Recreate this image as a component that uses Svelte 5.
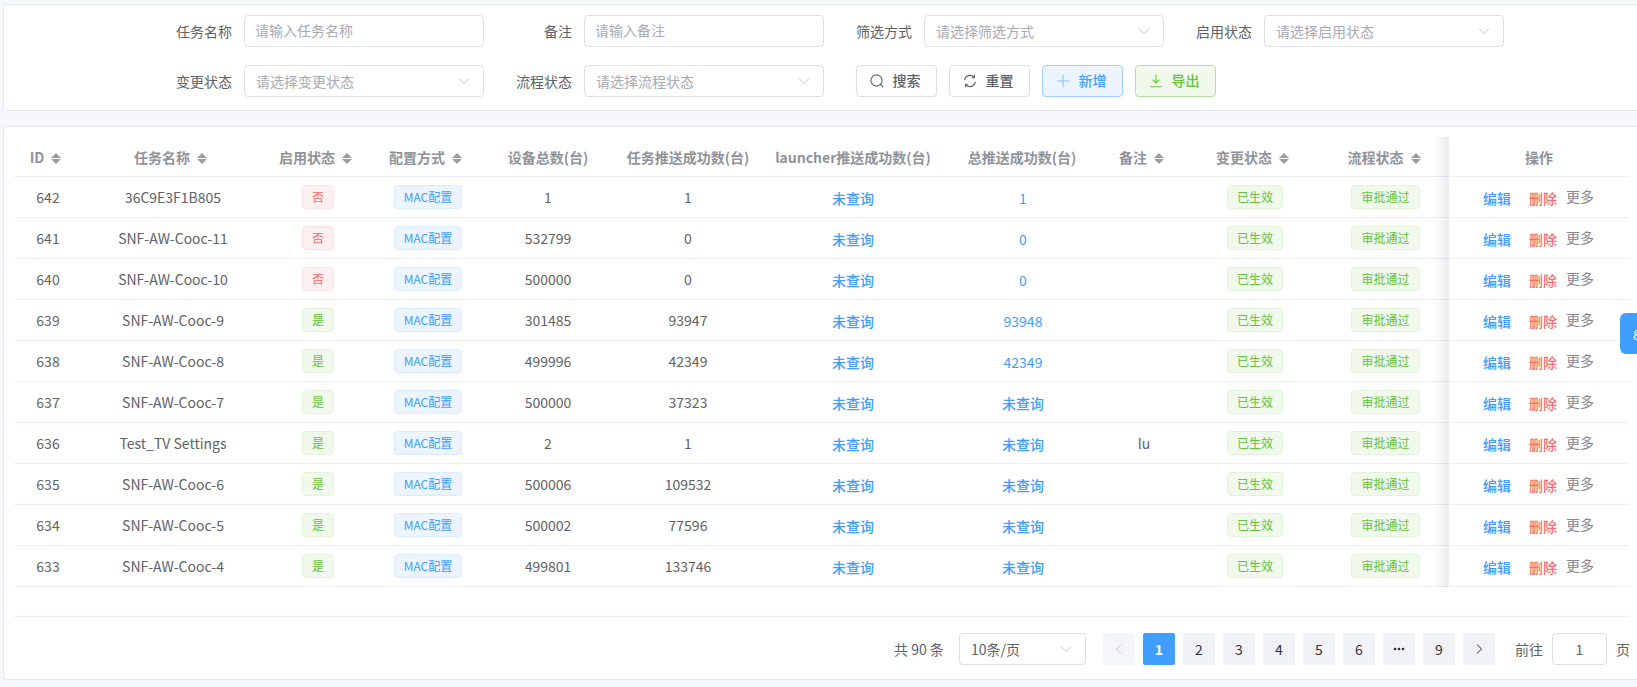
<script>
  const rows = [
    [642,'36C9E3F1B805',0,1,1,'1',''],
    [641,'SNF-AW-Cooc-11',0,532799,0,'0',''],
    [640,'SNF-AW-Cooc-10',0,500000,0,'0',''],
    [639,'SNF-AW-Cooc-9',1,301485,93947,'93948',''],
    [638,'SNF-AW-Cooc-8',1,499996,42349,'42349',''],
    [637,'SNF-AW-Cooc-7',1,500000,37323,null,''],
    [636,'Test_TV Settings',1,2,1,null,'lu'],
    [635,'SNF-AW-Cooc-6',1,500006,109532,null,''],
    [634,'SNF-AW-Cooc-5',1,500002,77596,null,''],
    [633,'SNF-AW-Cooc-4',1,499801,133746,null,''],
  ];
  const heads = [
    ['ID',true,68],['任务名称',true,182],['启用状态',true,108],['配置方式',true,112],
    ['设备总数(台)',false,128],['任务推送成功数(台)',false,152],['launcher推送成功数(台)',false,178],
    ['总推送成功数(台)',false,160],['备注',true,84],['变更状态',true,138],['流程状态',true,125],['操作',false,180],
  ];
  const pages = ['2','3','4','5','6','more','9'];
</script>

{#snippet chevron()}
  <svg class="chev" viewBox="0 0 14 14"><path d="M2 4.5 7 9.7 12 4.5" fill="none" stroke="#c0c4cc" stroke-width="1"/></svg>
{/snippet}

{#snippet field(label, placeholder, select)}
  <div class="item">
    <span class="lab">{label}</span>
    <div class="inp" class:sel={select}>
      <span class="ph">{placeholder}</span>
      {#if select}{@render chevron()}{/if}
    </div>
  </div>
{/snippet}

<div class="page">
  <section class="card filter">
    <div class="frow">
      {@render field('任务名称','请输入任务名称',false)}
      {@render field('备注','请输入备注',false)}
      {@render field('筛选方式','请选择筛选方式',true)}
      {@render field('启用状态','请选择启用状态',true)}
    </div>
    <div class="frow">
      {@render field('变更状态','请选择变更状态',true)}
      {@render field('流程状态','请选择流程状态',true)}
      <div class="btns">
        <button class="btn">
          <svg viewBox="0 0 14 14"><circle cx="6.5" cy="6.5" r="5.6" fill="none" stroke="currentColor" stroke-width="1.1"/><path d="M10.6 10.6 13 13" stroke="currentColor" stroke-width="1.1"/></svg>
          搜索
        </button>
        <button class="btn">
          <svg viewBox="0 0 14 14"><path d="M1.6 6.2A5.4 5.4 0 0 1 11 3.2M12.4 7.8A5.4 5.4 0 0 1 3 10.8" fill="none" stroke="currentColor" stroke-width="1.1"/><path d="M11.4 1v2.7H8.8M2.6 13v-2.7h2.6" fill="none" stroke="currentColor" stroke-width="1.1"/></svg>
          重置
        </button>
        <button class="btn blue">
          <svg viewBox="0 0 14 14"><path d="M7 .8v12.4M.8 7h12.4" fill="none" stroke="currentColor" stroke-width="1.2"/></svg>
          新增
        </button>
        <button class="btn green">
          <svg viewBox="0 0 14 14"><path d="M7 .8v8M3.6 5.6 7 9l3.4-3.4M1.2 12.8h11.6" fill="none" stroke="currentColor" stroke-width="1.1"/></svg>
          导出
        </button>
      </div>
    </div>
  </section>

  <section class="card main">
    <div class="tablewrap">
      <table>
        <colgroup>
          {#each heads as h}<col style:width="{h[2]}px" />{/each}
        </colgroup>
        <thead>
          <tr>
            {#each heads as h}
              <th>
                <span class="ht">{h[0]}{#if h[1]}<span class="sort"><i class="up"></i><i class="down"></i></span>{/if}</span>
              </th>
            {/each}
          </tr>
        </thead>
        <tbody>
          {#each rows as r}
            <tr>
              <td>{r[0]}</td>
              <td>{r[1]}</td>
              <td><span class="tag {r[2] ? 'g' : 'r'}">{r[2] ? '是' : '否'}</span></td>
              <td><span class="tag b">MAC配置</span></td>
              <td>{r[3]}</td>
              <td>{r[4]}</td>
              <td><span class="link strong">未查询</span></td>
              <td class="tot">
                {#if r[5] === null}<span class="link strong">未查询</span>{:else}<span class="link">{r[5]}</span>{/if}
              </td>
              <td>{r[6]}</td>
              <td><span class="tag g">已生效</span></td>
              <td class="flow"><span class="tag g">审批通过</span></td>
              <td class="ops">
                <span class="link strong">编辑</span><span class="del">删除</span><span class="more">更多</span>
              </td>
            </tr>
          {/each}
        </tbody>
      </table>
      <div class="shade"></div>
    </div>

    <footer class="pager">
      <span class="total">共 90 条</span>
      <div class="size"><span>10条/页</span>{@render chevron()}</div>
      <div class="pbtns">
        <span class="pb off"><svg viewBox="0 0 12 12"><path d="M8 1.5 3.5 6 8 10.5" fill="none" stroke="currentColor"/></svg></span>
        <span class="pb on">1</span>
        {#each pages as p}
          <span class="pb">
            {#if p === 'more'}
              <svg viewBox="0 0 12 12"><circle cx="2" cy="6" r="1.3" fill="currentColor"/><circle cx="6" cy="6" r="1.3" fill="currentColor"/><circle cx="10" cy="6" r="1.3" fill="currentColor"/></svg>
            {:else}{p}{/if}
          </span>
        {/each}
        <span class="pb"><svg viewBox="0 0 12 12"><path d="M4 1.5 8.5 6 4 10.5" fill="none" stroke="currentColor"/></svg></span>
      </div>
      <span class="goto">前往</span>
      <div class="jump">1</div>
      <span class="unit">页</span>
    </footer>
  </section>

  <div class="float"><span>8</span></div>
</div>

<style>
  :global(body) { margin: 0; background: #f5f7fa; }
  .page {
    position: relative; height: 687px; width: 1637px; overflow: hidden; box-sizing: border-box;
    padding: 4px 0 0 3px; background: #f5f7fa; color: #606266;
    font: 14px "Noto Sans CJK SC", "Noto Sans", sans-serif;
  }
  .card { background: #fff; border: 1px solid #e4e7ed; border-radius: 4px; box-sizing: border-box; width: 1640px; }
  .filter { height: 107px; padding-top: 10px; margin-bottom: 15px; }
  .frow { display: flex; height: 32px; margin-bottom: 18px; padding-left: 6px; }
  .item { display: flex; align-items: center; width: 340px; flex: none; }
  .frow > .item:first-child { margin-left: 144px; }
  .lab { width: 90px; padding-right: 12px; box-sizing: border-box; text-align: right; }
  .inp {
    display: flex; align-items: center; justify-content: space-between; height: 32px; width: 240px;
    box-sizing: border-box; border: 1px solid #dcdfe6; border-radius: 4px; padding: 0 11px 2px 10px; background: #fff;
  }
  .inp.sel { padding: 0 11px; }
  .ph { color: #a8abb2; line-height: 1; }
  .chev { width: 14px; height: 14px; margin-right: 1px; flex: none; }
  .btns { display: flex; gap: 12px; margin-left: 22px; }
  .btn {
    width: 81px; height: 32px; box-sizing: border-box; border: 1px solid #dcdfe6; border-radius: 4px;
    background: #fff; color: #606266; font: inherit; font-weight: 500; padding: 0 3px 2px 0;
    display: flex; align-items: center; justify-content: center; gap: 9px; white-space: nowrap;
  }
  .btn svg { width: 14px; height: 14px; flex: none; margin-top: 2px; }
  .btn.blue { background: #ecf5ff; border-color: #a0cfff; color: #409eff; }
  .btn.blue svg { color: #8cc5ff; }
  .btn.green { background: #f0f9eb; border-color: #b3e19d; color: #67c23a; }

  .main { height: 554px; padding: 10px 8px 0 10px; position: relative; }
  .tablewrap { position: relative; width: 1615px; }
  table { border-collapse: collapse; table-layout: fixed; width: 1615px; }
  th, td { padding: 0; text-align: center; border-bottom: 1px solid #ebeef5; box-sizing: border-box; white-space: nowrap; }
  th { height: 39px; font-weight: 700; color: #909399; padding-top: 2px; }
  td { height: 41px; }
  .ht { display: inline-flex; align-items: center; }
  .sort { display: inline-flex; flex-direction: column; gap: 1px; margin: 2px 5px 0 7px; }
  .sort i { width: 0; height: 0; border-left: 5px solid transparent; border-right: 5px solid transparent; }
  .sort .up { border-bottom: 5px solid #9a9da3; }
  .sort .down { border-top: 5px solid #9a9da3; }
  .tag {
    display: inline-block; height: 24px; line-height: 22px; font-size: 12px; padding: 0 9px;
    box-sizing: border-box; border: 1px solid; border-radius: 4px; vertical-align: middle;
  }
  .tag.r { background: #fef0f0; border-color: #fde2e2; color: #f56c6c; }
  .tag.g { background: #f0f9eb; border-color: #e1f3d8; color: #67c23a; }
  .tag.b { background: #ecf5ff; border-color: #d9ecff; color: #409eff; }
  .link { color: #409eff; position: relative; top: 1px; }
  .strong { font-weight: 500; }
  .tot { padding-left: 2px; }
  .flow { padding-right: 2px; }
  .ops { text-align: left; padding-left: 34px; }
  .del { color: #f56c6c; font-weight: 500; margin-left: 18px; position: relative; top: 1px; }
  .more { color: #85888e; margin-left: 9px; position: relative; top: -1px; }
  .shade {
    position: absolute; top: 0; bottom: 0; right: 180px; width: 14px;
    background: linear-gradient(to left, rgba(0,0,0,.08), rgba(0,0,0,0));
    border-right: 1px solid #ebeef5;
  }
  .pager {
    position: absolute; left: 10px; top: 489px; width: 1615px; height: 64px; box-sizing: border-box;
    border-top: 1px solid #ebeef5; display: flex; align-items: center;
  }
  .pager > * { flex: none; white-space: nowrap; }
  .total { margin-left: 880px; width: 65px; }
  .size {
    width: 127px; height: 32px; box-sizing: border-box; border: 1px solid #dcdfe6; border-radius: 4px;
    display: flex; align-items: center; justify-content: space-between; padding: 0 11px; margin-right: 17px;
  }
  .pbtns { display: flex; gap: 8px; }
  .pb {
    width: 32px; height: 32px; border-radius: 2px; background: #f0f2f5; color: #303133;
    display: flex; align-items: center; justify-content: center; font-weight: 400;
  }
  .pb svg { width: 12px; height: 12px; }
  .pb.off { background: #f4f6f9; color: #c0c4cc; }
  .pb.on { background: #409eff; color: #fff; font-weight: 700; }
  .goto { margin-left: 20px; }
  .jump {
    width: 55px; height: 32px; box-sizing: border-box; border: 1px solid #dcdfe6; border-radius: 4px; margin-left: 9px;
    display: flex; align-items: center; justify-content: center;
  }
  .unit { margin-left: 9px; }
  .float {
    position: absolute; right: 0; top: 313px; width: 17px; height: 41px; background: #409eff;
    border-radius: 6px 0 0 6px; color: #fff; overflow: hidden; display: flex; align-items: center; padding-left: 13px; box-sizing: border-box;
  }
</style>
